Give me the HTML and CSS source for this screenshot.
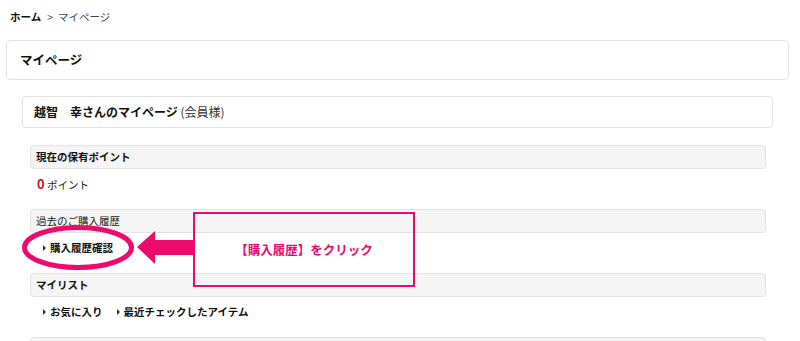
FILE: index.html
```html
<html>
<head>
<meta charset="utf-8">
<title>マイページ</title>
<link rel="stylesheet" href="styles.css">
</head>
<body>

<div class="crumb"><b>ホーム</b><span class="sep">&gt;</span>マイページ</div>

<div class="page-title">マイページ</div>

<div class="content">

<div class="member"><b>越智　幸さんのマイページ</b> (会員様)</div>

<div class="sections">

<div class="sec-head bold">現在の保有ポイント</div>
<div class="sec-body"><span class="pt">0</span> ポイント</div>

<div class="sec-head">過去のご購入履歴</div>
<div class="sec-body links"><span class="lnk">購入履歴確認</span></div>

<div class="sec-head bold">マイリスト</div>
<div class="sec-body links"><span class="lnk">お気に入り</span><span class="lnk">最近チェックしたアイテム</span></div>

<div class="sec-head"></div>

</div>
</div>

<!-- annotation overlay -->
<svg class="mark" width="200" height="70" viewBox="0 0 200 70">
<ellipse cx="68" cy="35.5" rx="53.5" ry="20" fill="none" stroke="#ec0a6c" stroke-width="5"/>
<polygon points="127,35 145,19 145,28 183,28 183,43 145,43 145,52" fill="#ec0a6c"/>
</svg>
<div class="note">【購入履歴】をクリック</div>

</body>
</html>
```

FILE: styles.css
```css
body {
margin: 0;
background: #fff;
color: #222;
font-family: "Noto Sans CJK JP", "Noto Sans", sans-serif;
font-size: 10.5px;
position: relative;
overflow: hidden;
}

.crumb {
padding: 9px 10px 0 10px;
height: 23px;
color: #444;
}

.crumb b {
color: #111;
}

.crumb .sep {
margin: 0 5px 0 6px;
}

.page-title {
margin: 8px 11px 0 6px;
height: 38px;
line-height: 38px;
border: 1px solid #e2e2e2;
border-radius: 5px;
padding-left: 13px;
font-size: 12.5px;
font-weight: bold;
color: #111;
}

.content {
margin: 16px 27px 0 22px;
}

.member {
height: 30px;
line-height: 30px;
border: 1px solid #e2e2e2;
border-radius: 4px;
padding-left: 11px;
font-size: 12px;
color: #333;
}

.member b {
color: #111;
}

.sections {
margin: 17px 7px 0 8px;
}

.sec-head {
height: 22px;
line-height: 22px;
background: #f5f5f5;
border: 1px solid #e2e2e2;
border-radius: 4px;
padding-left: 5px;
color: #222;
}

.sec-head.bold {
font-weight: bold;
color: #111;
}

.sec-body {
height: 40px;
line-height: 30px;
padding-left: 7px;
}

.sec-body.links {
padding-left: 13px;
}

.pt {
color: #d0121b;
font-weight: bold;
font-size: 13px;
}

.lnk {
font-weight: bold;
color: #111;
padding-left: 7px;
margin-right: 14px;
position: relative;
}

.lnk:before {
content: "";
position: absolute;
left: 0;
top: 50%;
margin-top: -3px;
border-left: 3px solid #333;
border-top: 3px solid transparent;
border-bottom: 3px solid transparent;
}

.mark {
position: absolute;
left: 10px;
top: 212px;
}

.note {
position: absolute;
left: 193px;
top: 212px;
width: 218px;
height: 71px;
border: 2px solid #ec0a6c;
display: flex;
align-items: center;
justify-content: center;
color: #ec0a6c;
font-weight: bold;
font-size: 12.5px;
}
```
